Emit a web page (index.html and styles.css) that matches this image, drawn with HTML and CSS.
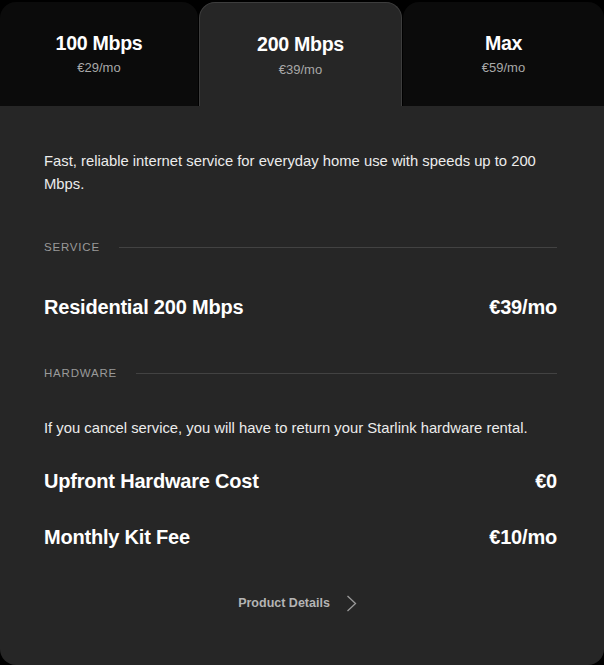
FILE: index.html
```html
<!DOCTYPE html>
<html>
<head>
<meta charset="utf-8">
<link rel="stylesheet" href="styles.css">
</head>
<body>
<div class="plan">
  <div class="tabs">
    <div class="tab">
      <div class="tab-title">100 Mbps</div>
      <div class="tab-price">€29/mo</div>
    </div>
    <div class="tab active">
      <div class="tab-title">200 Mbps</div>
      <div class="tab-price">€39/mo</div>
    </div>
    <div class="tab">
      <div class="tab-title">Max</div>
      <div class="tab-price">€59/mo</div>
    </div>
  </div>
  <div class="card">
    <p class="desc">Fast, reliable internet service for everyday home use with speeds up to 200 Mbps.</p>
    <div class="section-label label-service"><span>SERVICE</span><i class="rule"></i></div>
    <div class="row row-service"><span>Residential 200 Mbps</span><span>€39/mo</span></div>
    <div class="section-label label-hardware"><span>HARDWARE</span><i class="rule"></i></div>
    <p class="note">If you cancel service, you will have to return your Starlink hardware rental.</p>
    <div class="row row-upfront"><span>Upfront Hardware Cost</span><span>€0</span></div>
    <div class="row row-kit"><span>Monthly Kit Fee</span><span>€10/mo</span></div>
    <div class="details">
      <span>Product Details</span>
      <svg class="chev" width="11" height="17" viewBox="0 0 11 17"><path d="M1.5 1 L9.5 8.5 L1.5 16" fill="none" stroke="#9a9a9a" stroke-width="1.3"/></svg>
    </div>
  </div>
</div>
</body>
</html>
```
FILE: styles.css
```css
* { box-sizing: border-box; }
html, body { margin: 0; padding: 0; background: #000; }
body {
  font-family: "Liberation Sans", Arial, sans-serif;
  color: #fff;
  width: 604px;
  height: 665px;
  overflow: hidden;
}
.plan { display: flex; flex-direction: column; height: 665px; }
.tabs {
  display: grid;
  grid-template-columns: 198px 203px 1fr;
  column-gap: 1px;
  padding-top: 2px;
  height: 106px;
}
.tab {
  background: #0b0b0b;
  border-radius: 16px 16px 0 0;
  display: flex;
  flex-direction: column;
  align-items: center;
  padding-top: 29px;
}
.tab.active {
  background: #262626;
  border: 1px solid #3d3d3d;
  border-bottom: none;
  padding-top: 29px;
}
.tab-title {
  font-size: 19.6px;
  font-weight: bold;
  line-height: 24px;
  letter-spacing: -0.3px;
}
.tab-price {
  font-size: 13px;
  line-height: 16px;
  margin-top: 5px;
  color: #a8a8a8;
}
.tab.active .tab-price { margin-top: 6px; }
.card {
  flex: 1;
  background: #262626;
  border-radius: 0 0 16px 16px;
  padding: 44px 47px 0 44px;
}
.desc, .note {
  margin: 0;
  font-size: 14.8px;
  line-height: 23px;
  color: #ececec;
}
.section-label {
  display: flex;
  align-items: center;
  gap: 19px;
  font-size: 11.5px;
  line-height: 16px;
  letter-spacing: 0.8px;
  color: #9a9a9a;
}
.rule { flex: 1; height: 1px; background: #424242; }
.label-service { margin-top: 43px; }
.label-hardware { margin-top: 45px; }
.row {
  display: flex;
  justify-content: space-between;
  font-size: 20px;
  font-weight: bold;
  line-height: 26px;
  letter-spacing: -0.2px;
}
.row-service { margin-top: 39px; }
.note { margin-top: 36px; }
.row-upfront { margin-top: 28px; }
.row-kit { margin-top: 30px; }
.details {
  display: flex;
  justify-content: center;
  align-items: center;
  gap: 16px;
  margin-top: 44px;
  font-size: 12.5px;
  font-weight: bold;
  line-height: 18px;
  color: #b4b4b4;
  padding-right: 6px;
}
.chev { display: block; }
```
